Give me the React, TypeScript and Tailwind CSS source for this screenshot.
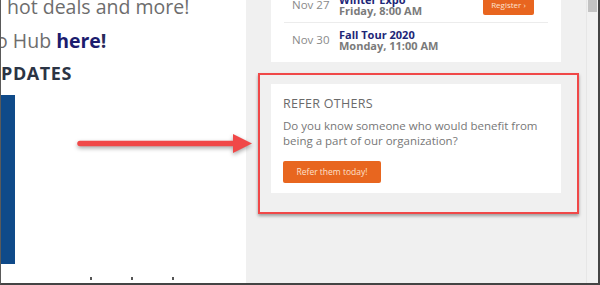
const events = [
  { date: 'Nov 27', title: 'Winter Expo', time: 'Friday, 8:00 AM', register: true },
  { date: 'Nov 30', title: 'Fall Tour 2020', time: 'Monday, 11:00 AM', register: false },
];

const Arrow = () => (
  <svg
    className="absolute left-[70px] top-[128px] drop-shadow-[0_2px_2px_rgba(0,0,0,0.35)]"
    width="186"
    height="32"
    viewBox="0 0 186 32"
  >
    <line x1="9" y1="15.5" x2="166" y2="15.5" stroke="#f04848" strokeWidth="5.5" strokeLinecap="round" />
    <polygon points="162,6 181,15.5 162,25" fill="#f04848" />
  </svg>
);

export default function App() {
  return (
    <div className="relative w-[600px] h-[285px] overflow-hidden bg-white font-['Open_Sans',sans-serif] border-l border-l-[#5a5a5a] border-r-2 border-r-[#444] border-b-2 border-b-[#444]">
      <div className="flex h-full">
        {/* Left column: page content, cut off */}
        <div className="w-[245px] shrink-0 bg-white flex flex-col overflow-hidden">
          <p className="mt-[-5px] ml-[6px] text-[19.5px] leading-[24px] text-[#6d6d6d] whitespace-nowrap">
            hot deals and more!
          </p>
          <p className="mt-[10px] ml-[-5px] text-[19.5px] leading-[24px] text-[#6d6d6d] whitespace-nowrap">
            o Hub <span className="font-bold text-[#1c1c6e]">here</span>
            <span className="font-bold text-[#2a2a5a]">!</span>
          </p>
          <h2 className="mt-[9px] text-[18px] leading-[22px] font-bold tracking-[0.6px] text-[#2b3444] whitespace-nowrap">
            PDATES
          </h2>
          <div className="mt-[11px] w-[14px] h-[169px] bg-[#0f4a89]" />
          <div className="mt-[13px] flex gap-[39px] pl-[89px]">
            <span className="w-[2px] h-[3px] bg-[#555]" />
            <span className="w-[2px] h-[3px] bg-[#555]" />
            <span className="w-[2px] h-[3px] bg-[#555]" />
          </div>
        </div>

        {/* Right column: sidebar */}
        <div className="w-[340px] shrink-0 bg-[#f0f0f0] pl-[25px]">
          <div className="w-[290px] mt-[-12px] bg-white px-[13px] pb-[5px]">
            {events.map((e, i) => (
              <div
                key={e.date}
                className={`flex items-center py-[6px] ${i > 0 ? 'border-t border-[#ececec]' : ''}`}
              >
                <div className="w-[55px] pl-[8px] text-[11.5px] text-[#8a8a8a]">{e.date}</div>
                <div className="flex-1 text-[11px] leading-[11px] font-bold">
                  <div className="text-[#1d2677]">{e.title}</div>
                  <div className="text-[#7a7a7a]">{e.time}</div>
                </div>
                {e.register && (
                  <button className="mr-[14px] w-[51px] h-[20px] rounded-[2px] bg-[#e8651f] text-[8px] text-[#fde2d0]">
                    Register ›
                  </button>
                )}
              </div>
            ))}
          </div>

          <div className="w-[290px] mt-[22px] bg-white px-[12px] pt-[12px] pb-[10px]">
            <h3 className="text-[12.5px] leading-[16px] tracking-[0.3px] text-[#6a6a6a]">REFER OTHERS</h3>
            <p className="mt-[6px] text-[11.5px] leading-[15px] text-[#777]">
              Do you know someone who would benefit from being a part of our organization?
            </p>
            <button className="mt-[13px] w-[98px] h-[22px] rounded-[2px] bg-[#e8661f] text-[8.5px] text-[#fde0cc]">
              Refer them today!
            </button>
          </div>
        </div>

        {/* Scrollbar */}
        <div className="w-[12px] shrink-0 bg-[#f1f1f1] border-l border-[#e6e6e6] pl-[1px]">
          <div className="w-[9px] h-[12px] bg-[#c3c3c3]" />
        </div>
      </div>

      {/* Annotation overlay */}
      <div className="absolute left-[257px] top-[73px] w-[321px] h-[141px] border-2 border-[#f04848] shadow-[0_2px_3px_rgba(0,0,0,0.35)]" />
      <Arrow />
    </div>
  );
}
